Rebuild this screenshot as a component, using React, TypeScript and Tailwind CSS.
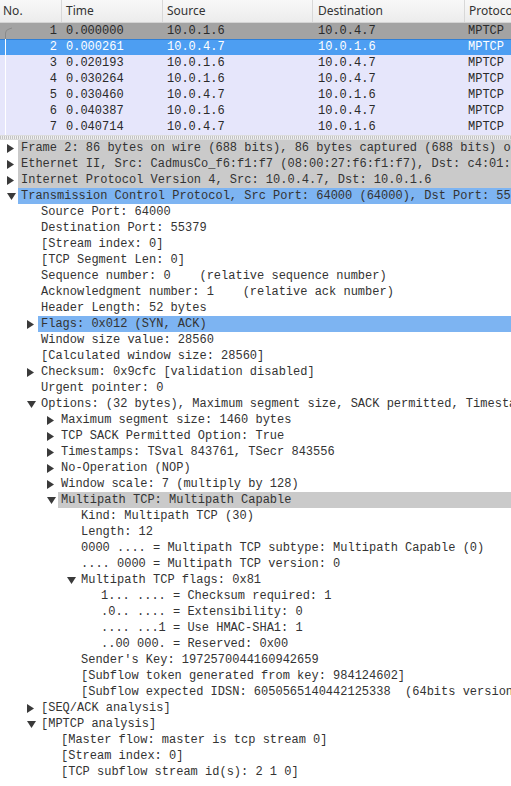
import React from 'react';

type Pkt = { no: number; time: string; src: string; dst: string; proto: string };

const packets: Pkt[] = [
  { no: 1, time: '0.000000', src: '10.0.1.6', dst: '10.0.4.7', proto: 'MPTCP' },
  { no: 2, time: '0.000261', src: '10.0.4.7', dst: '10.0.1.6', proto: 'MPTCP' },
  { no: 3, time: '0.020193', src: '10.0.1.6', dst: '10.0.4.7', proto: 'MPTCP' },
  { no: 4, time: '0.030264', src: '10.0.1.6', dst: '10.0.4.7', proto: 'MPTCP' },
  { no: 5, time: '0.030460', src: '10.0.4.7', dst: '10.0.1.6', proto: 'MPTCP' },
  { no: 6, time: '0.040387', src: '10.0.1.6', dst: '10.0.4.7', proto: 'MPTCP' },
  { no: 7, time: '0.040714', src: '10.0.4.7', dst: '10.0.1.6', proto: 'MPTCP' },
];

type Node = { t: string; l: number; a?: 'r' | 'd'; hl?: 'gray' | 'blue' };

const tree: Node[] = [
  { t: 'Frame 2: 86 bytes on wire (688 bits), 86 bytes captured (688 bits) on interface 0', l: 0, a: 'r', hl: 'gray' },
  { t: 'Ethernet II, Src: CadmusCo_f6:f1:f7 (08:00:27:f6:f1:f7), Dst: c4:01:32:58:00:00', l: 0, a: 'r', hl: 'gray' },
  { t: 'Internet Protocol Version 4, Src: 10.0.4.7, Dst: 10.0.1.6', l: 0, a: 'r', hl: 'gray' },
  { t: 'Transmission Control Protocol, Src Port: 64000 (64000), Dst Port: 55379', l: 0, a: 'd', hl: 'blue' },
  { t: 'Source Port: 64000', l: 1 },
  { t: 'Destination Port: 55379', l: 1 },
  { t: '[Stream index: 0]', l: 1 },
  { t: '[TCP Segment Len: 0]', l: 1 },
  { t: 'Sequence number: 0    (relative sequence number)', l: 1 },
  { t: 'Acknowledgment number: 1    (relative ack number)', l: 1 },
  { t: 'Header Length: 52 bytes', l: 1 },
  { t: 'Flags: 0x012 (SYN, ACK)', l: 1, a: 'r', hl: 'blue' },
  { t: 'Window size value: 28560', l: 1 },
  { t: '[Calculated window size: 28560]', l: 1 },
  { t: 'Checksum: 0x9cfc [validation disabled]', l: 1, a: 'r' },
  { t: 'Urgent pointer: 0', l: 1 },
  { t: 'Options: (32 bytes), Maximum segment size, SACK permitted, Timestamps', l: 1, a: 'd' },
  { t: 'Maximum segment size: 1460 bytes', l: 2, a: 'r' },
  { t: 'TCP SACK Permitted Option: True', l: 2, a: 'r' },
  { t: 'Timestamps: TSval 843761, TSecr 843556', l: 2, a: 'r' },
  { t: 'No-Operation (NOP)', l: 2, a: 'r' },
  { t: 'Window scale: 7 (multiply by 128)', l: 2, a: 'r' },
  { t: 'Multipath TCP: Multipath Capable', l: 2, a: 'd', hl: 'gray' },
  { t: 'Kind: Multipath TCP (30)', l: 3 },
  { t: 'Length: 12', l: 3 },
  { t: '0000 .... = Multipath TCP subtype: Multipath Capable (0)', l: 3 },
  { t: '.... 0000 = Multipath TCP version: 0', l: 3 },
  { t: 'Multipath TCP flags: 0x81', l: 3, a: 'd' },
  { t: '1... .... = Checksum required: 1', l: 4 },
  { t: '.0.. .... = Extensibility: 0', l: 4 },
  { t: '.... ...1 = Use HMAC-SHA1: 1', l: 4 },
  { t: '..00 000. = Reserved: 0x00', l: 4 },
  { t: "Sender's Key: 1972570044160942659", l: 3 },
  { t: '[Subflow token generated from key: 984124602]', l: 3 },
  { t: '[Subflow expected IDSN: 6050565140442125338  (64bits version)]', l: 3 },
  { t: '[SEQ/ACK analysis]', l: 1, a: 'r' },
  { t: '[MPTCP analysis]', l: 1, a: 'd' },
  { t: '[Master flow: master is tcp stream 0]', l: 2 },
  { t: '[Stream index: 0]', l: 2 },
  { t: '[TCP subflow stream id(s): 2 1 0]', l: 2 },
];

const indent = ['pl-[7px]', 'pl-[27px]', 'pl-[47px]', 'pl-[67px]', 'pl-[87px]'];

const Arrow = ({ dir }: { dir?: 'r' | 'd' }) => (
  <span className="w-[11px] h-4 flex items-center shrink-0">
    {dir === 'r' && (
      <svg width="7" height="9" viewBox="0 0 7 9">
        <path d="M0 0 L7 4.5 L0 9 Z" fill="#3a3a3a" />
      </svg>
    )}
    {dir === 'd' && (
      <svg width="9" height="7" viewBox="0 0 9 7">
        <path d="M0 0 L9 0 L4.5 7 Z" fill="#3a3a3a" />
      </svg>
    )}
  </span>
);

export default function App() {
  const mono = "font-['Liberation_Mono',monospace] text-[12px] leading-4";
  return (
    <div className="w-[511px] h-[786px] overflow-hidden bg-white flex flex-col">
      {/* Packet list header */}
      <div className="h-[23px] flex bg-gradient-to-b from-[#f8f8f8] to-[#ececec] border-b border-[#d4d4d4] font-['Noto_Sans',sans-serif] text-[12px] text-[#333] items-center whitespace-nowrap">
        <div className="w-[62px] pl-[3px] border-r border-[#d8d8d8] h-full flex items-center">No.</div>
        <div className="w-[101px] pl-[4px] border-r border-[#d8d8d8] h-full flex items-center">Time</div>
        <div className="w-[150px] pl-[4px] border-r border-[#d8d8d8] h-full flex items-center">Source</div>
        <div className="w-[152px] pl-[5px] border-r border-[#d8d8d8] h-full flex items-center">Destination</div>
        <div className="flex-1 pl-[4px] h-full flex items-center overflow-hidden">Protocol</div>
      </div>

      {/* Packet rows */}
      <div className={`${mono} whitespace-nowrap`}>
        {packets.map((p) => {
          const row =
            p.no === 1
              ? 'bg-[#a3a3a3] text-[#2a2a2a]'
              : p.no === 2
                ? 'bg-[#4d9ef2] text-white shadow-[inset_0_1px_0_#2f7fd6]'
                : 'bg-[#e6e6fb] text-[#2a2a2a]';
          return (
            <div key={p.no} className={`h-4 flex ${row}`}>
              <div className="w-[62px] relative flex justify-end pr-[5px]">
                {p.no === 1 ? (
                  <svg className="absolute left-0 top-0" width="14" height="16" viewBox="0 0 14 16">
                    <path d="M5.5 16 V10 Q5.5 7 9 6 L12 5" stroke="#8a8a8a" fill="none" strokeWidth="1" />
                  </svg>
                ) : (
                  <span className="absolute left-[5px] top-0 h-full w-px bg-white" />
                )}
                {p.no}
              </div>
              <div className="w-[101px] pl-[4px]">{p.time}</div>
              <div className="w-[150px] pl-[4px]">{p.src}</div>
              <div className="w-[152px] pl-[5px]">{p.dst}</div>
              <div className="flex-1 pl-[3px] overflow-hidden">{p.proto}</div>
            </div>
          );
        })}
      </div>

      {/* Splitter */}
      <div className="h-[5px] bg-[#eeeeee] bg-[repeating-linear-gradient(90deg,#c4c4c4_0_1px,#f0f0f0_1px_2px)] border-t border-b border-[#dcdcdc]" />

      {/* Details tree */}
      <div className={`${mono} whitespace-pre text-[#333]`}>
        {tree.map((n, i) => {
          const hl = n.hl === 'gray' ? 'bg-[#cacaca]' : n.hl === 'blue' ? 'bg-[#7db4f2]' : '';
          return (
            <div key={i} className={`h-4 flex ${indent[n.l]}`}>
              <Arrow dir={n.a} />
              <span className={`flex-1 pl-[3px] overflow-hidden ${hl}`}>{n.t}</span>
            </div>
          );
        })}
      </div>
    </div>
  );
}
